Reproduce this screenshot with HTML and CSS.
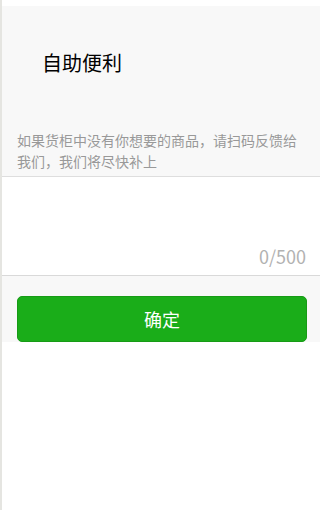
FILE: index.html
```html
<!DOCTYPE html>
<html lang="zh-CN">
<head>
<meta charset="utf-8">
<title>自助便利</title>
<link rel="stylesheet" href="styles.css">
</head>
<body>
<div class="page">
  <div class="panel">
    <div class="title">自助便利</div>
    <div class="desc">如果货柜中没有你想要的商品，请扫码反馈给我们，我们将尽快补上</div>
    <div class="area">
      <textarea class="input" maxlength="500"></textarea>
      <div class="counter">0/500</div>
    </div>
    <div class="actions">
      <button class="btn" type="button">确定</button>
    </div>
  </div>
</div>
</body>
</html>
```

FILE: styles.css
```css
html, body {
  margin: 0;
  padding: 0;
  background: #ffffff;
}
body {
  font-family: "Noto Sans CJK SC", "Noto Sans", "Liberation Sans", sans-serif;
}
.page {
  border-left: 2px solid #e5e5e1;
  min-height: 510px;
  box-sizing: border-box;
  padding-top: 6px;
}
.panel {
  background: #f8f8f8;
}
.title {
  padding: 43px 40px 0 40px;
  font-size: 20px;
  line-height: 28px;
  color: #000000;
}
.desc {
  padding: 53px 15px 4px 15px;
  font-size: 14px;
  line-height: 21px;
  color: #999999;
  border-bottom: 1px solid #dedede;
}
.area {
  background: #ffffff;
  border-bottom: 1px solid #d9d9d9;
  display: flex;
  flex-direction: column;
}
.input {
  display: block;
  height: 67px;
  border: none;
  outline: none;
  resize: none;
  padding: 0 15px;
  margin: 0;
  background: transparent;
  font: inherit;
  box-sizing: border-box;
}
.counter {
  text-align: right;
  padding: 0 14px 7px 0;
  font-size: 18px;
  line-height: 24px;
  color: #b2b2b2;
}
.actions {
  padding: 20px 13px 0 15px;
}
.btn {
  display: block;
  width: 100%;
  height: 46px;
  margin: 0;
  border: 1px solid #179b16;
  border-radius: 5px;
  background: #1aad19;
  color: #ffffff;
  font-family: inherit;
  font-size: 18px;
  line-height: 24px;
  padding: 0;
}
```
